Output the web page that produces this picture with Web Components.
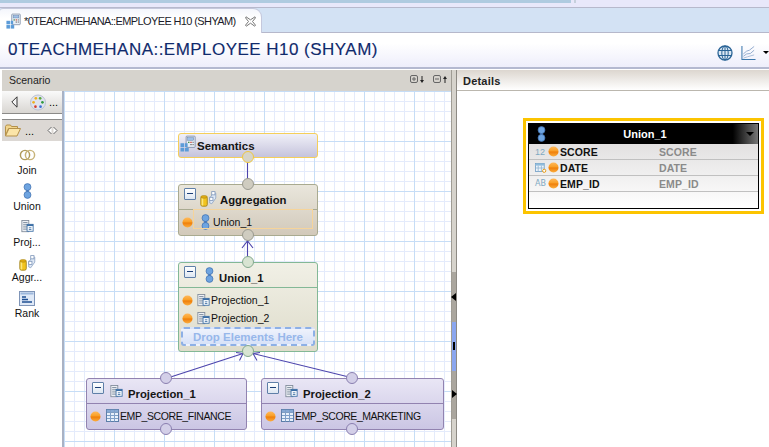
<!DOCTYPE html>
<html><head><meta charset="utf-8"><style>
html,body{margin:0;padding:0;height:100%;overflow:hidden;background:#fff;font-family:"Liberation Sans",Arial,sans-serif}
</style></head><body>
<app-shell></app-shell>
<script>
const ICONS={
semantics:`<svg width="24" height="24" viewBox="0 0 24 24"><rect x="9.5" y="1.5" width="12" height="15" rx="1" fill="#e8eef6" stroke="#6f7f9a"/><rect x="11.5" y="3.5" width="8" height="3.5" fill="#9fc0e6" stroke="#5a7ba8" stroke-width=".6"/><rect x="12" y="9" width="2" height="1.6" fill="#3d8a3d"/><rect x="15" y="9" width="2" height="1.6" fill="#d14a3a"/><rect x="18" y="9" width="1.6" height="1.6" fill="#777"/><rect x="15" y="12" width="2" height="1.6" fill="#777"/><rect x="18" y="12" width="1.6" height="1.6" fill="#777"/><g fill="#5b9bd8"><rect x="2" y="11" width="5" height="5"/><rect x="8" y="11" width="3.5" height="5"/><rect x="2" y="17" width="5" height="5"/><rect x="8" y="17" width="5" height="5"/></g></svg>`,
union:`<svg width="9" height="16" viewBox="0 0 10 18"><rect x="3.5" y="6" width="3" height="6" fill="#4a78b8"/><circle cx="5" cy="4.6" r="3.9" fill="#6ea4e0" stroke="#3f6fae" stroke-width=".8"/><circle cx="5" cy="13.4" r="3.9" fill="#6ea4e0" stroke="#3f6fae" stroke-width=".8"/></svg>`,
projection:`<svg width="13" height="13" viewBox="0 0 15 15"><rect x="1" y=".5" width="8" height="13" fill="#eef1f5" stroke="#7f8a99"/><path d="M2.500 3h5M2.500 5.500h5M2.500 8h5M2.500 10.500h5" stroke="#6d7d90"/><rect x="7" y="5" width="7" height="8" fill="#fff" stroke="#3b6ea5"/><rect x="7" y="5" width="7" height="2" fill="#3b6ea5"/><path d="M9 9h3M9 11h3" stroke="#3b6ea5"/></svg>`,
aggregation:`<svg width="17" height="17" viewBox="1 1 21 21"><path d="M13 11l5-7 2.500 1v6l-5 7-2.500-1z" fill="#dfe8f5" stroke="#8ca3c4"/><rect x="15.500" y="3" width="4" height="4" fill="#fff" stroke="#7f97ba"/><rect x="13" y="10" width="4" height="4" fill="#fff" stroke="#7f97ba"/><rect x="2" y="9" width="8" height="12" rx="2" fill="#f2c41e" stroke="#9a7a10"/><path d="M3 10h2v10H3z" fill="#fbe67e"/><ellipse cx="6" cy="9.500" rx="4" ry="1.600" fill="#e3ad10" stroke="#9a7a10" stroke-width=".6"/></svg>`,
bullet:`<svg width="11" height="11" viewBox="0 0 11 11"><defs><linearGradient id="b" x1="0" y1="0" x2="0" y2="1"><stop offset="0" stop-color="#ffb85a"/><stop offset=".48" stop-color="#f99d22"/><stop offset=".52" stop-color="#ee7c08"/><stop offset="1" stop-color="#fcae3e"/></linearGradient></defs><circle cx="5.500" cy="5.500" r="5" fill="url(#b)"/></svg>`,
table:`<svg width="13" height="14" viewBox="0 0 13 14"><rect x=".5" y=".5" width="12" height="12" fill="#e8f0fb" stroke="#5c7ea8"/><rect x=".5" y=".5" width="12" height="3" fill="#86a8d4" stroke="#5c7ea8" stroke-width=".6"/><path d="M4.500 1v11.500M8.500 1v11.500M1 6.500h11M1 9.500h11" stroke="#7f9fc8"/></svg>`,
join:`<svg width="17" height="12" viewBox="0 0 18 13"><circle cx="6.300" cy="6.500" r="5" fill="none" stroke="#b09b5c" stroke-width="1.600"/><circle cx="11.700" cy="6.500" r="5" fill="none" stroke="#c8b47a" stroke-width="1.600"/></svg>`,
rank:`<svg width="16" height="15" viewBox="0 0 16 15"><rect x=".5" y=".5" width="15" height="14" fill="#dfe9f7" stroke="#7f95b8"/><rect x="1.500" y="1.500" width="13" height="2" fill="#9db8dc"/><path d="M3 6h4M3 8.500h6M3 11h10" stroke="#1f4f93" stroke-width="1.400"/></svg>`,
folder:`<svg width="16" height="13" viewBox="0 0 16 13"><path d="M.5 2.500l1-1.500h4l1 1.500h6v2h-9l-3 7z" fill="#f2d58c" stroke="#b5914a"/><path d="M.5 12h11.500l3.500-7.500H4z" fill="#fbe5a8" stroke="#b5914a"/></svg>`,
palette:`<svg width="16" height="17" viewBox="0 0 17 18"><circle cx="8.500" cy="9" r="8" fill="#dfe3ee" stroke="#b9bfd0"/><circle cx="6.200" cy="4.600" r="1.400" fill="#eeb01f"/><circle cx="10.800" cy="4.600" r="1.400" fill="#5aa63c"/><circle cx="3.800" cy="8.800" r="1.400" fill="#eeb01f"/><circle cx="13.200" cy="8.800" r="1.400" fill="#2f9a3c"/><circle cx="5.800" cy="13.400" r="1.400" fill="#d43a2a"/><circle cx="11.200" cy="13.400" r="1.400" fill="#3a6fd4"/></svg>`,
globe:`<svg width="16" height="16" viewBox="0 0 16 16" fill="none" stroke="#2a6496" style="margin-right:8px"><circle cx="8" cy="8" r="7" stroke-width="1.300" fill="#dbe8f4"/><ellipse cx="8" cy="8" rx="3.200" ry="7"/><path d="M8 1v14M1.200 5.500h13.600M1.200 10.500h13.600"/></svg>`,
chart:`<svg width="15" height="16" viewBox="0 0 16 16" fill="none"><path d="M1 .5V15H15.500" stroke="#3b78ad" stroke-width="1.100"/><path d="M2.500 9L6 6l3-1 5-4" stroke="#8fa9cc"/><path d="M2.500 11.500L6 9l4-.5 4-3.500" stroke="#8fa9cc"/><path d="M2.500 13.500L7 12l7-2" stroke="#a8bcd8"/></svg>`,
date:`<svg width="12" height="12" viewBox="0 0 15 14"><rect x=".5" y="1.500" width="11" height="10" fill="#edf4fb" stroke="#6c9cc4"/><rect x=".5" y="1.500" width="11" height="2.500" fill="#8fbcdc"/><path d="M4 4v7M8 4v7M1 7h10" stroke="#8fb4d0"/><circle cx="11.500" cy="10.500" r="2" fill="#fff" stroke="#e69a12" stroke-width="1.200"/></svg>`,
num:`<span style="font:9px 'Liberation Sans',sans-serif;color:#7fa9c2">12</span>`,
text:`<span style="font:8px 'DejaVu Sans',sans-serif;color:#7fa9c2">AB</span>`
};
function define(name,css,html,init){
  customElements.define(name,class extends HTMLElement{
    connectedCallback(){
      if(this.shadowRoot)return;
      const r=this.attachShadow({mode:'open'});
      const a=k=>this.getAttribute(k)||'';
      r.innerHTML=`<style>${css}</style>`+(typeof html==='function'?html(a):html);
      if(init)init(r,this);
    }
  });
}
define('top-strip',`:host{display:flex;height:8px;background:#e8e8fa;border-bottom:1px solid #b7b9cc;box-sizing:border-box}
.a{width:571px;height:3px;background:#afcbe0}.b{width:2px;height:3px;background:#c6d0dc;margin-left:3px}`,`<div class="a"></div><div class="b"></div>`);
define('tab-bar',`:host{display:flex;height:24px;background:#d3e2f4;border-bottom:1px solid #b6b8cb;box-sizing:content-box}
.tab{width:262px;height:25px;margin-bottom:-1px;background:linear-gradient(#f4f6fc,#fff 40%);border-top-right-radius:9px;border-top-left-radius:3px;border-top:1px solid #c5c8dc;border-right:1px solid #c5c8dc;box-sizing:border-box;display:flex;align-items:center;padding:0 0 0 5px;font:11px "Liberation Sans",sans-serif;letter-spacing:-.62px;color:#1c1c2a;white-space:nowrap}
.i{width:17px;height:17px;margin-right:2px;display:flex}.i svg{width:17px;height:17px}
.x{margin-left:9px;display:flex}`,
`<div class="tab"><span class="i">${ICONS.semantics}</span><span>*0TEACHMEHANA::EMPLOYEE H10 (SHYAM)</span><span class="x"><svg width="11" height="11" viewBox="0 0 11 11" fill="#fff" stroke="#777"><path d="M1 .8l4.500 3 4.500-3 .5 1L7.500 5.500l3 3.700-.8 1-4.200-3-4.200 3-.8-1 3-3.700L.5 1.800z"/></svg></span></div>`);
define('editor-header',`:host{display:flex;align-items:center;height:36px;box-sizing:border-box;background:linear-gradient(#fff 30%,#eeeefb);border-bottom:2px solid #b4b9d0;padding:0 0 0 8px;color:#102a6c;font:17px "Liberation Sans",sans-serif;letter-spacing:.47px;-webkit-text-stroke:.15px #102a6c;white-space:nowrap}
.t{flex:1}.tools{display:flex;align-items:center;padding-top:5px}
.c{width:0;height:0;border:3.500px solid transparent;border-top:3.500px solid #000;border-bottom:0;margin-left:7px}`,
`<span class="t"><slot></slot></span><span class="tools">${ICONS.globe}${ICONS.chart}<span class="c"></span></span>`);
define('pane-title',`:host{display:flex;align-items:center;height:21px;box-sizing:border-box;font:10.5px "Liberation Sans",sans-serif;color:#222;padding-left:7px}
:host([kind=scenario]){background:#d6d3cd;margin-left:2px;padding-bottom:2px}
:host([kind=details]){background:linear-gradient(#dcd6cf,#fff);border-bottom:1px solid #bbb7ae;padding-left:6px;padding-top:2px;font:bold 11px "Liberation Sans",sans-serif;letter-spacing:.2px}
.s{flex:1}.tools{display:flex;gap:7px;margin-right:2px}`,
a=>`<span class="s"><slot></slot></span><span class="tools"><slot name="tools"></slot></span>`);
define('fold-btn',`:host{display:inline-flex}`,a=>`<svg width="16" height="9" viewBox="0 0 16 9" fill="none" stroke="#666"><rect x=".5" y=".5" width="7" height="7" rx="1.500"/><path d="M2 4h4"/>${a('dir')==='down'?'<path d="M4 2v4"/><path d="M12 1v5" stroke="#222"/><path d="M10 5h4l-2 3z" fill="#222" stroke="none"/>':'<path d="M12 3v5" stroke="#222"/><path d="M10 4h4l-2-3z" fill="#222" stroke="none"/>'}</svg>`);
define('palette-tool',`:host{display:flex;flex-direction:column;align-items:center;height:35.75px;padding-right:10px;font:10.5px "Liberation Sans",sans-serif;color:#111;line-height:13px}
.i{height:18px;display:flex;align-items:center;justify-content:center}`,a=>`<div class="i">${ICONS[a('icon')]}</div><slot></slot>`);
define('tool-palette',`:host{display:flex;flex-direction:column;width:60px;margin-left:2px;border-right:2px solid #a9b2c4;box-sizing:content-box;background:#fff;font:11px "Liberation Sans",sans-serif}
.nav{height:23px;display:flex;align-items:center;background:linear-gradient(#fafafa,#d9d6d2);border-bottom:1px solid #8b8a88;padding-left:9px;box-sizing:border-box}
.sep{height:5px;border-bottom:1px solid #8b8a88;box-sizing:content-box}
.dr{height:21px;background:#dcd8d4;display:flex;align-items:center;padding-left:3px;gap:4px;box-sizing:border-box}
.sp{flex:1}.list{display:flex;flex-direction:column;padding-top:5px}`,
`<div class="nav"><svg width="7" height="12" viewBox="0 0 7 12" fill="#f4f4f4" stroke="#333" style="margin-right:12px"><path d="M6 .8V11.200L.8 6z"/></svg>${ICONS.palette}<span style="margin-left:3px">...</span></div><div class="sep"></div>
<div class="dr">${ICONS.folder}<span>...</span><span class="sp"></span><svg width="11" height="9" viewBox="0 0 11 9" fill="#fff" stroke="#666" style="margin-right:4px"><path d="M4.500 1L1 4.500 4.500 8M6.500 1L10 4.500 6.500 8"/></svg></div><div class="list"><slot></slot></div>`);
define('port-dot',`:host{position:absolute;width:12px;height:12px;margin-left:-6px;margin-top:-6px;border-radius:50%;box-sizing:border-box;border:1px solid var(--pb,#9a9a90);background:var(--pf,#d8d6cc);z-index:2}`,``);
define('model-node',`:host{position:absolute;box-sizing:border-box;display:flex;flex-direction:column;border-radius:3px;border:1px solid var(--bd);background:var(--bg)}
.head{height:25px;box-sizing:border-box;position:relative;font:bold 11.3px "Liberation Sans",sans-serif;color:#151515;border-bottom:1px solid var(--bd);white-space:nowrap;flex:none}
.col{position:absolute;left:5px;top:3px;width:12px;height:12px;border:1px solid #5f7fa8;background:linear-gradient(#fff,#dde6f2);box-sizing:border-box;border-radius:1px}
.col:after{content:"";position:absolute;left:2px;right:2px;top:4px;height:1px;background:#1c3f77}
.ic{position:absolute;top:var(--it,5px);left:var(--il,25px);display:flex}
.lb{position:absolute;left:var(--ll,41px);top:9px}
.body{flex:1;display:flex;flex-direction:column}`,
a=>`<div class="head"><span class="col"></span><span class="ic">${ICONS[a('icon')]}</span><span class="lb">${a('label')}</span></div><div class="body"><slot></slot></div>`,
(r,h)=>{const p=k=>h.getAttribute(k);h.style.left=p('x')+'px';h.style.top=p('y')+'px';h.style.width=p('w')+'px';h.style.height=p('h')+'px'});
define('node-row',`:host{display:flex;align-items:center;height:18px;padding-left:3px;font:10.5px "Liberation Sans",sans-serif;color:#111;white-space:nowrap;flex:none}
.b{display:flex;margin-right:var(--bg2,4px)}.i{display:flex;margin-right:var(--ig,1px)}`,
a=>`<span class="b">${ICONS.bullet}</span><span class="i">${ICONS[a('icon')]}</span><slot></slot>`);
define('drop-zone',`:host{display:flex;align-items:center;justify-content:center;height:19px;margin:0 2px;box-sizing:border-box;border:2px dashed #8db0e6;border-radius:3px;background:linear-gradient(#eef2fc,#d8e2f8);color:#97b7ea;font:bold 11.5px "Liberation Sans",sans-serif;white-space:nowrap}`,`<slot></slot>`);
define('wire-layer',`:host{position:absolute;inset:0;display:block;pointer-events:none}svg{display:block}`,
`<svg width="387" height="356" fill="none" stroke="#4c44ac" stroke-width="1.1">
<path d="M183.500 66V93"/><path d="M183.500 145V172"/><path d="M178 157l5.500-7 5.500 7"/>
<path d="M102 287.500L179 262.500"/><path d="M289 287L189 262.500"/>
<path d="M172 261.500L179 262.500L175.500 269.500"/><path d="M196 261.500L189 262.500L193 269.500"/></svg>`);
define('model-canvas',`:host{display:block;position:relative;flex:1;overflow:hidden;background-color:#fff;
background-image:linear-gradient(#c6ddf6 1px,transparent 1px),linear-gradient(90deg,#c6ddf6 1px,transparent 1px),linear-gradient(#e4ebfb 1px,transparent 1px),linear-gradient(90deg,#e4ebfb 1px,transparent 1px);
background-size:50px 50px,50px 50px,10px 10px,10px 10px;background-position:0 0,0 0,0 0,0 0}`,`<slot></slot>`);
define('scenario-pane',`:host{display:flex;flex-direction:column;width:451px;flex:none;min-height:0}.b{display:flex;flex:1;min-height:0}`,
`<pane-title kind="scenario">Scenario<fold-btn slot="tools" dir="down"></fold-btn><fold-btn slot="tools" dir="up"></fold-btn></pane-title><div class="b"><slot></slot></div>`);
define('pane-sash',`:host{display:flex;flex-direction:column;width:6px;flex:none;background:#d6d3cc;border-left:1px solid #9f9c94;border-right:1px solid #8d8a84;box-sizing:border-box;position:relative}
.g{position:absolute;left:0;right:0;top:202px;height:147px;background:#aaa69e}
.bl{position:absolute;left:0;right:0;top:252px;height:49px;background:#8aa6ef}
.t{position:absolute;width:0;height:0;border:4px solid transparent}
.l{left:-1px;top:223px;border-right:5px solid #000;border-left:0}
.r{left:0;top:320px;border-left:5px solid #000;border-right:0}
.m{position:absolute;left:1px;top:272px;width:2px;height:8px;background:#000}`,`<div class="g"></div><div class="bl"></div><div class="t l"></div><div class="m"></div><div class="t r"></div>`);
define('details-pane',`:host{display:flex;flex-direction:column;flex:1;min-width:0;background:#fff}.b{padding:27px 0 0 66px}`,`<pane-title kind="details">Details</pane-title><div class="b"><slot></slot></div>`);
define('details-row',`:host{display:grid;grid-template-columns:13px 12px 99px 1fr;align-items:center;height:16px;box-sizing:border-box;border-bottom:1px solid #c0c0c0;padding-left:6px;font:bold 10.5px "Liberation Sans",sans-serif;color:#111;letter-spacing:.1px;white-space:nowrap}
.i,.b{display:flex}.m{color:#8a8a8a}`,
a=>`<span class="i">${ICONS[a('icon')]}</span><span class="b">${ICONS.bullet}</span><span>${a('name')}</span><span class="m">${a('map')}</span>`);
define('details-card',`:host{display:block;width:241px;height:96px;box-sizing:border-box;border:3px solid #fcc400;padding:2px;background:#fff}
.box{height:100%;box-sizing:border-box;border:1px solid #000;background:linear-gradient(#d9d7d7,#fff)}
.h{height:20px;background:linear-gradient(90deg,#000 89%,#777);color:#fff;position:relative;font:bold 11px "Liberation Sans",sans-serif;display:flex;align-items:center;justify-content:center;padding-left:3px;box-sizing:border-box}
.u{position:absolute;left:8px;top:2px;display:flex}.v{position:absolute;right:4px;top:8px;width:0;height:0;border:4.500px solid transparent;border-top:4.500px solid #000;border-bottom:0}`,
a=>`<div class="box"><div class="h"><span class="u">${ICONS.union}</span>${a('label')}<span class="v"></span></div><slot></slot></div>`);
define('app-shell',`:host{display:flex;flex-direction:column;height:447px;width:769px;overflow:hidden}
.main{display:flex;flex:1;min-height:0;padding-top:1px;background:#fff}`,
`<top-strip></top-strip><tab-bar></tab-bar><editor-header>0TEACHMEHANA::EMPLOYEE H10 (SHYAM)</editor-header>
<div class="main"><scenario-pane>
<tool-palette>
<palette-tool icon="join">Join</palette-tool><palette-tool icon="union">Union</palette-tool><palette-tool icon="projection">Proj...</palette-tool><palette-tool icon="aggregation">Aggr...</palette-tool><palette-tool icon="rank">Rank</palette-tool>
</tool-palette>
<model-canvas>
<wire-layer></wire-layer>
<semantics-node></semantics-node>
<model-node x="114" y="93" w="140" h="52" icon="aggregation" label="Aggregation" style="--bd:#a9aa90;--bg:linear-gradient(#e9e6dc,#d2c9ba);--ll:41px;--il:21px;--it:5px">
<node-row icon="union" style="margin-top:3px;--bg2:8px;--ig:3px">Union_1</node-row>
<port-dot style="left:69px;top:-1px;--pf:#cfccc0"></port-dot><port-dot style="left:69px;top:50px;--pf:#cfccc0"></port-dot>
</model-node>
<sel-box></sel-box>
<model-node x="114" y="171" w="140" h="90" icon="union" label="Union_1" style="--bd:#83b896;--bg:linear-gradient(#f1f0e6,#dedccb);--ll:40px;--il:26px;--it:4px">
<node-row icon="projection" style="margin-top:3px">Projection_1</node-row><node-row icon="projection">Projection_2</node-row><drop-zone>Drop Elements Here</drop-zone>
<port-dot style="left:69px;top:-1px;--pf:#d8e4d2;--pb:#83a88e"></port-dot><port-dot style="left:69px;top:88px;--pf:#d8e4d2;--pb:#83a88e"></port-dot>
</model-node>
<model-node x="22" y="287" w="161" h="52" icon="projection" label="Projection_1" style="--bd:#9283b0;--bg:linear-gradient(#e9e6f5,#cbc6e4);--ll:41px;--il:23px;--it:6px">
<node-row icon="table" style="margin-top:3px;--bg2:5px;letter-spacing:-.4px">EMP_SCORE_FINANCE</node-row>
<port-dot style="left:79px;top:-1px;--pf:#d3cfe8;--pb:#8a7fb0"></port-dot><port-dot style="left:79px;top:50px;--pf:#d3cfe8;--pb:#8a7fb0"></port-dot>
</model-node>
<model-node x="197" y="287" w="183" h="52" icon="projection" label="Projection_2" style="--bd:#9283b0;--bg:linear-gradient(#e9e6f5,#cbc6e4);--ll:41px;--il:23px;--it:6px">
<node-row icon="table" style="margin-top:3px;--bg2:5px;letter-spacing:-.45px">EMP_SCORE_MARKETING</node-row>
<port-dot style="left:90px;top:-1px;--pf:#d3cfe8;--pb:#8a7fb0"></port-dot><port-dot style="left:90px;top:50px;--pf:#d3cfe8;--pb:#8a7fb0"></port-dot>
</model-node>
</model-canvas></scenario-pane>
<pane-sash></pane-sash>
<details-pane><details-card label="Union_1">
<details-row icon="num" name="SCORE" map="SCORE"></details-row><details-row icon="date" name="DATE" map="DATE"></details-row><details-row icon="text" name="EMP_ID" map="EMP_ID"></details-row>
</details-card></details-pane></div>`);
define('semantics-node',`:host{position:absolute;left:114px;top:42px;width:140px;height:25px;box-sizing:border-box;border:1px solid #f5cf5a;border-radius:3px;background:linear-gradient(#f0f0f8,#c5c3dc);display:flex;align-items:center;padding-left:18px;font:bold 11.5px "Liberation Sans",sans-serif;color:#151515}
.i{position:absolute;left:0;top:1px;display:flex}.i svg{width:18px;height:18px}`,
`<span class="i">${ICONS.semantics}</span>Semantics<port-dot style="left:69px;top:23px;--pf:#d6d4ca;--pb:#f0c840"></port-dot>`);
define('sel-box',`:host{position:absolute;left:129px;top:118px;width:120px;height:20px;box-sizing:border-box;border:1px solid #f6d49a;pointer-events:none;z-index:1}`,``);
</script>
</body></html>
